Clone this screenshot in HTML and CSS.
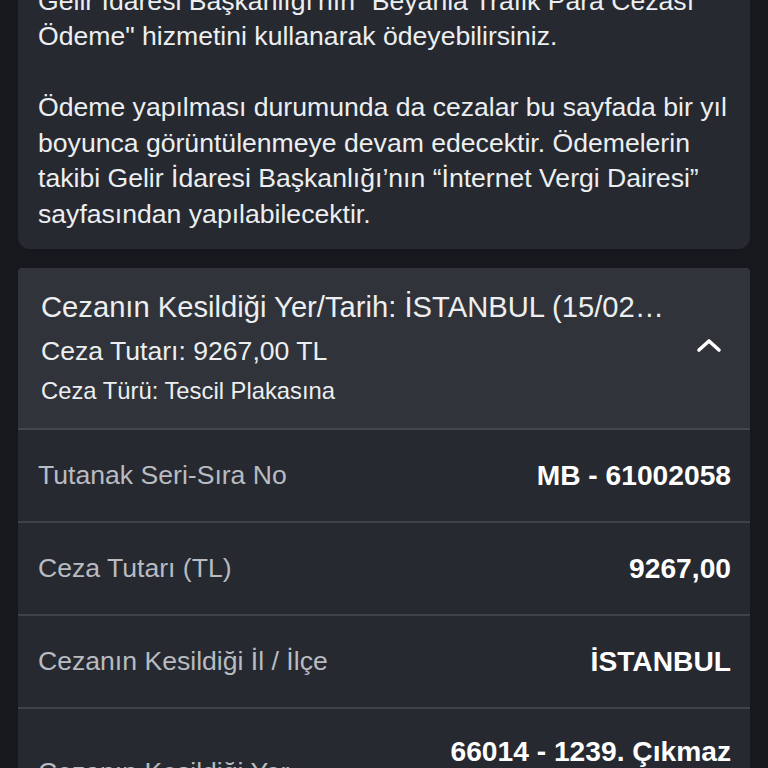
FILE: index.html
```html
<!DOCTYPE html>
<html lang="tr">
<head>
<meta charset="utf-8">
<link rel="stylesheet" href="styles.css">
</head>
<body>
<div class="page">
  <section class="info-card">
    <p class="info-text">Borcunuzu ödemek için aşağıdaki bağlantıdan<br>Gelir İdaresi Başkanlığı'nın "Beyanla Trafik Para Cezası<br>Ödeme" hizmetini kullanarak ödeyebilirsiniz.</p>
    <p class="info-text">Ödeme yapılması durumunda da cezalar bu sayfada bir yıl<br>boyunca görüntülenmeye devam edecektir. Ödemelerin<br>takibi Gelir İdaresi Başkanlığı’nın “İnternet Vergi Dairesi”<br>sayfasından yapılabilecektir.</p>
  </section>

  <section class="fine-card">
    <header class="fine-head">
      <div class="fine-head-text">
        <div class="fine-title">Cezanın Kesildiği Yer/Tarih: İSTANBUL (15/02/2024)</div>
        <div class="fine-amount">Ceza Tutarı: 9267,00 TL</div>
        <div class="fine-type">Ceza Türü: Tescil Plakasına</div>
      </div>
      <svg class="chevron" width="26" height="16" viewBox="0 0 26 16" aria-hidden="true">
        <path d="M3 13 L13 4 L23 13" fill="none" stroke="#ffffff" stroke-width="3.6" stroke-linecap="round" stroke-linejoin="round"/>
      </svg>
    </header>
    <div class="row">
      <span class="label">Tutanak Seri-Sıra No</span>
      <span class="value">MB - 61002058</span>
    </div>
    <div class="row">
      <span class="label">Ceza Tutarı (TL)</span>
      <span class="value">9267,00</span>
    </div>
    <div class="row">
      <span class="label">Cezanın Kesildiği İl / İlçe</span>
      <span class="value">İSTANBUL</span>
    </div>
    <div class="row row-tall">
      <span class="label">Cezanın Kesildiği Yer</span>
      <span class="value">66014 - 1239. Çıkmaz<br>Sokak</span>
    </div>
  </section>
</div>
</body>
</html>
```

FILE: styles.css
```css
html, body {
  margin: 0;
  padding: 0;
  background: #16181d;
  height: 768px;
  overflow: hidden;
}
body {
  font-family: "Liberation Sans", Arial, sans-serif;
  color: #eceef0;
}
.page {
  padding: 0 18px;
  margin-top: -72px;
}
.info-card {
  background: #262930;
  border-radius: 12px;
  padding: 20px 16px 17px 20px;
}
.info-text {
  margin: 0;
  font-size: 26.6px;
  line-height: 35.5px;
  white-space: nowrap;
}
.info-text + .info-text {
  margin-top: 35.5px;
}
.fine-card {
  margin-top: 19px;
  background: #262930;
  border-radius: 4px 4px 0 0;
  overflow: hidden;
}
.fine-head {
  background: #30333a;
  display: flex;
  align-items: center;
  padding: 20px 28px 22px 23px;
  border-bottom: 2px solid #43464d;
  gap: 20px;
}
.fine-head-text {
  flex: 1;
  min-width: 0;
}
.fine-title {
  font-size: 29.2px;
  line-height: 38px;
  white-space: nowrap;
  overflow: hidden;
  text-overflow: ellipsis;
  max-width: 627px;
}
.fine-amount {
  font-size: 26.6px;
  line-height: 50px;
}
.fine-type {
  font-size: 23.8px;
  line-height: 30px;
}
.chevron {
  flex: none;
  margin-bottom: 4px;
}
.row {
  display: flex;
  justify-content: space-between;
  align-items: center;
  height: 91px;
  padding: 0 19px 0 20px;
  border-bottom: 2px solid #3f4249;
}
.label {
  font-size: 26.6px;
  color: #b8bbc1;
}
.value {
  font-size: 28.2px;
  font-weight: bold;
  color: #ffffff;
  text-align: right;
}
.row-tall {
  height: 120px;
  align-items: flex-start;
  padding-top: 24px;
}
.row-tall .label {
  margin-top: 24px;
}
.row-tall .value {
  line-height: 36px;
}
```
